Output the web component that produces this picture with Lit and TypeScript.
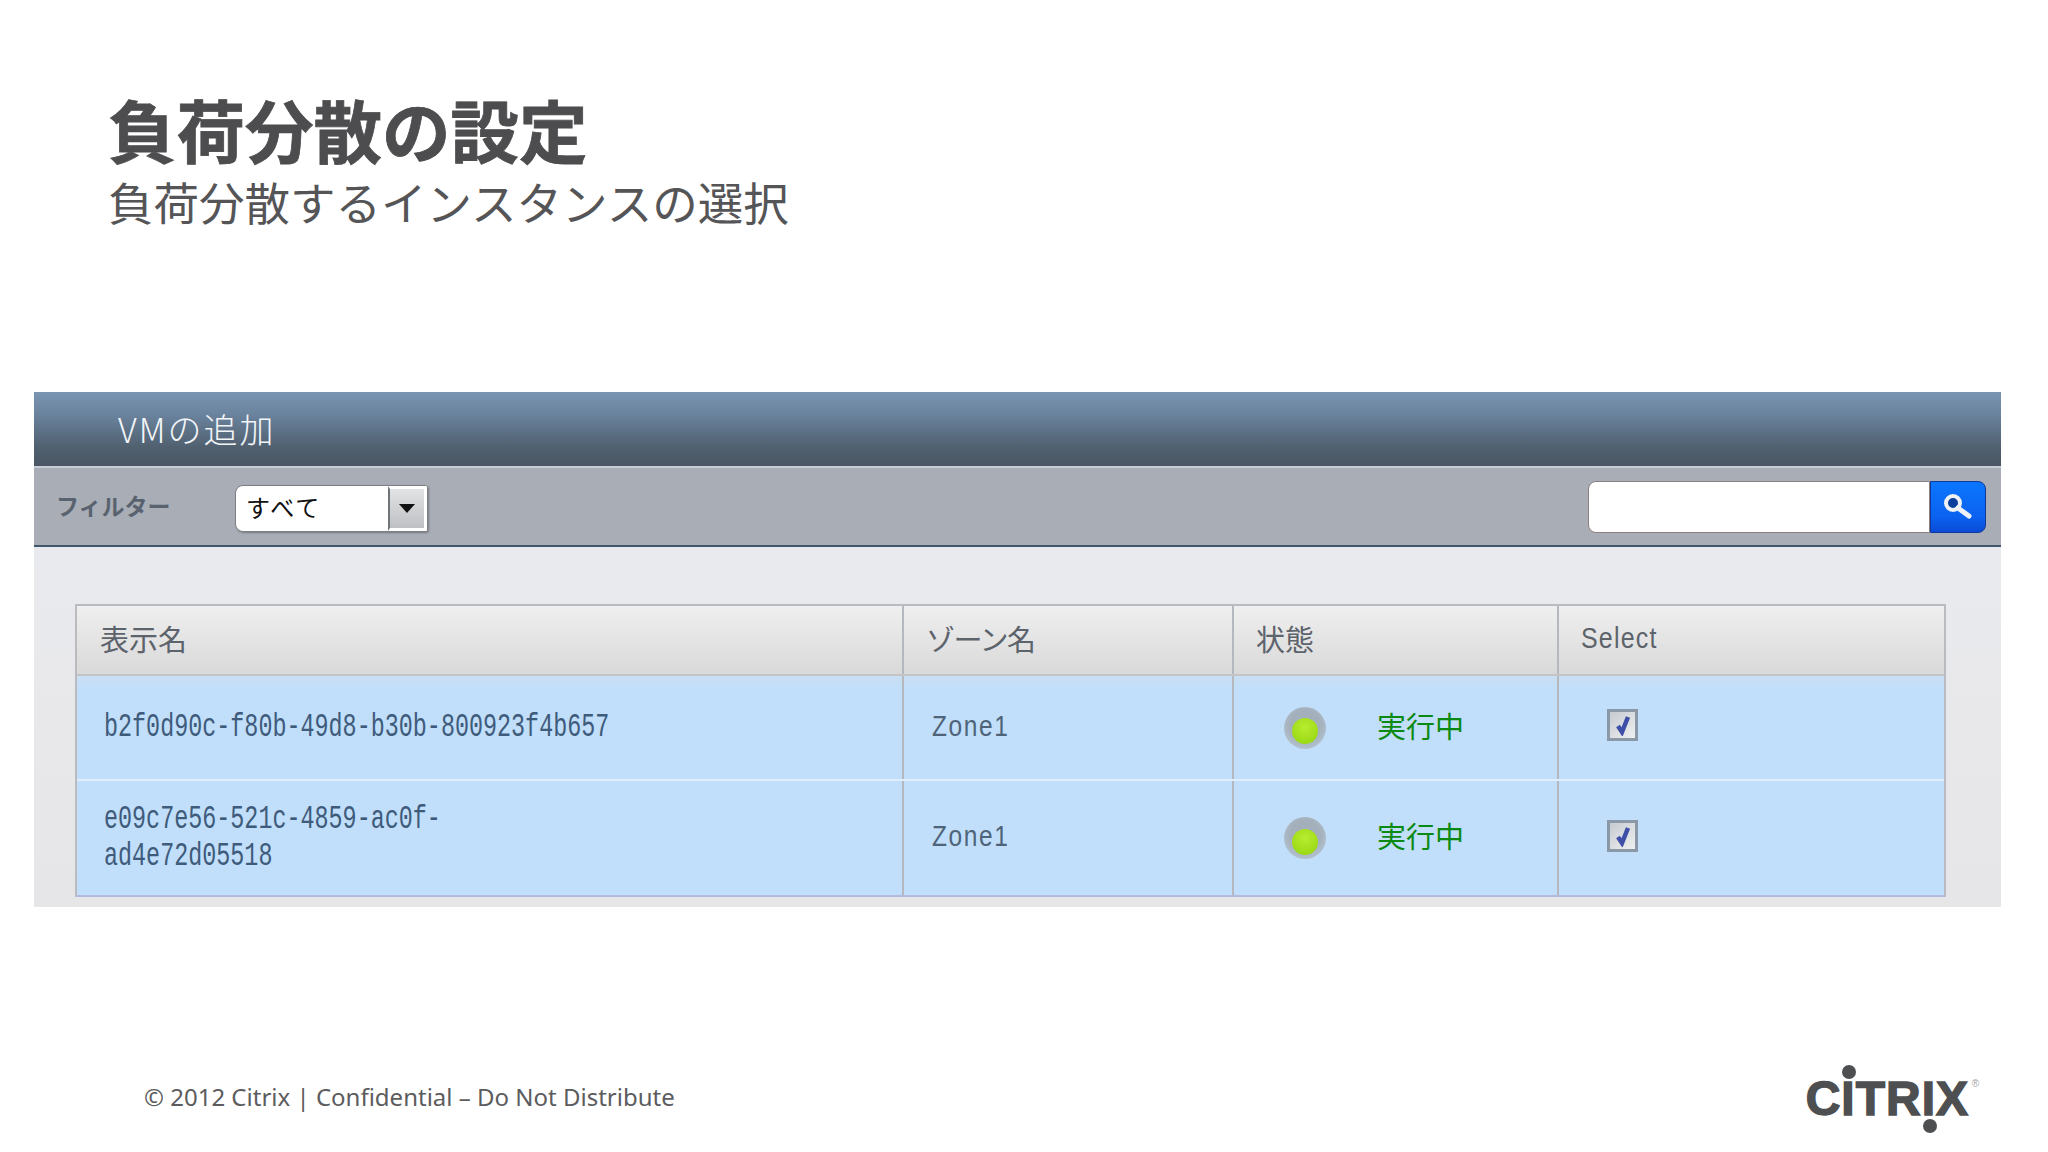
import { LitElement, html, css } from 'lit';
import { customElement } from 'lit/decorators.js';

const rows = [
  { lines: ['b2f0d90c-f80b-49d8-b30b-800923f4b657'], height: 103 },
  { lines: ['e09c7e56-521c-4859-ac0f-', 'ad4e72d05518'], height: 114 },
];

@customElement('app-root')
export class AppRoot extends LitElement {
  static styles = css`
    :host {
      display: block;
      width: 2048px;
      height: 1152px;
      overflow: hidden;
      background: #ffffff;
      font-family: "Noto Sans CJK JP", "Noto Sans", sans-serif;
    }

    .heading {
      padding: 91px 0 0 108px;
      color: #4d4d4f;
    }

    .title {
      font-size: 68.5px;
      line-height: 76px;
      font-weight: 700;
      -webkit-text-stroke: 0.8px #4d4d4f;
    }

    .subtitle {
      margin-top: 7px;
      font-size: 45.5px;
      line-height: 54px;
      color: #555557;
    }

    .panel {
      margin: 164px 0 0 34px;
      width: 1967px;
      height: 515px;
      display: flex;
      flex-direction: column;
      background: linear-gradient(#ebecf0, #e6e6e8);
    }

    .panel-head {
      height: 74px;
      box-sizing: border-box;
      padding: 0 0 2px 84px;
      display: flex;
      align-items: center;
      font-size: 34px;
      letter-spacing: 2px;
      color: #f2f5f8;
      font-weight: 300;
      background: linear-gradient(#7a95b2, #6a839e 30%, #50606f 75%, #4a5664);
    }

    .toolbar {
      height: 81px;
      box-sizing: border-box;
      border-top: 2px solid #c6cdd4;
      border-bottom: 2px solid #40566c;
      background: #a8adb6;
      display: flex;
      align-items: center;
      padding: 0 15px 0 22px;
    }

    .filter-label {
      width: 179px;
      padding-bottom: 4px;
      font-size: 23px;
      font-weight: 700;
      color: #59636f;
    }

    .select {
      width: 193px;
      height: 47px;
      margin-top: 4px;
      box-sizing: border-box;
      display: flex;
      background: #ffffff;
      border-radius: 8px 3px 3px 8px;
      border: 1px solid #7d7f84;
      box-shadow: 1px 1px 2px #77797e;
      overflow: hidden;
    }

    .select-value {
      flex: 1;
      padding-left: 10px;
      font-size: 24px;
      letter-spacing: 2px;
      line-height: 42px;
      color: #111111;
    }

    .select-arrow {
      width: 39px;
      box-sizing: border-box;
      border: 3px solid #ffffff;
      border-left: 2px solid #70757c;
      background: linear-gradient(#e2e3e5, #bfc0c3);
      display: flex;
      align-items: center;
      justify-content: center;
    }

    .search {
      margin-left: auto;
      display: flex;
      height: 52px;
    }

    .search-input {
      width: 342px;
      box-sizing: border-box;
      background: #ffffff;
      border: 1px solid #8c7f80;
      border-radius: 8px 0 0 8px;
    }

    .search-button {
      width: 56px;
      box-sizing: border-box;
      border: 1px solid #10389a;
      border-radius: 0 8px 8px 0;
      background: linear-gradient(#0a76ff, #0b62f0 70%, #0a4bd6);
      display: flex;
      align-items: center;
      justify-content: center;
    }

    .table-wrap {
      padding: 57px 55px 0 41px;
    }

    .table {
      width: 1871px;
      box-sizing: border-box;
      border: 2px solid #b9bbc1;
      border-bottom-color: #b3bcdd;
    }

    .row {
      display: grid;
      grid-template-columns: 825px 330px 325px 1fr;
    }

    .row.head {
      height: 68px;
      background: linear-gradient(#efeff0, #d9d9da);
      border-bottom: 2px solid #c4c4c6;
    }

    .row.data {
      background: linear-gradient(#c9dff3, #c1dffa 14px);
    }

    .row.data + .row.data {
      background: #c1dffa;
      border-top: 2px solid #e0eefc;
    }

    .cell {
      display: flex;
      align-items: center;
      border-left: 2px solid #b5b8bf;
      box-sizing: border-box;
      min-width: 0;
    }

    .cell:first-child {
      border-left: 0;
    }

    .head .cell {
      padding: 0 0 5px 22px;
      font-size: 29px;
      color: #5d636b;
    }

    .head .cell:first-child {
      padding-left: 23px;
    }

    .head .tight {
      letter-spacing: -1.5px;
    }

    .head .latin {
      font-family: "Liberation Sans", sans-serif;
      font-size: 25px;
      letter-spacing: 1.2px;
      display: inline-block;
      transform: scaleY(1.2);
    }

    .name {
      padding-left: 27px;
      font-family: "Liberation Mono", monospace;
      font-size: 23.4px;
      color: #3f5b7c;
    }

    .name-lines {
      display: block;
      transform: scaleY(1.4);
      line-height: 26px;
    }

    .name-lines div {
      height: 26px;
      white-space: nowrap;
    }

    .zone {
      padding: 0 0 4px 28px;
      font-family: "Liberation Sans", sans-serif;
      font-size: 24.5px;
      letter-spacing: 1.6px;
      color: #4f6479;
    }

    .zone span {
      display: inline-block;
      transform: scaleY(1.2);
    }

    .state {
      padding: 0 0 6px 50px;
      font-size: 29px;
      color: #0a8a12;
    }

    .led {
      width: 42px;
      height: 42px;
      margin-top: 6px;
      border-radius: 50%;
      background: radial-gradient(circle at 50% 42%, #a3afba 45%, #b5c4d2 80%, #c1dffa 100%);
      display: flex;
      align-items: center;
      justify-content: center;
      flex: none;
      margin-right: 51px;
    }

    .led i {
      display: block;
      width: 26px;
      height: 26px;
      margin-top: 7px;
      border-radius: 50%;
      background: radial-gradient(circle at 50% 35%, #b8ec30, #92d40c);
    }

    .pick {
      padding: 0 0 5px 48px;
    }

    .check {
      width: 31px;
      height: 32px;
      box-sizing: border-box;
      border: 3px solid #8a98a8;
      background: linear-gradient(135deg, #c6cbd1, #efefef);
      display: flex;
      align-items: center;
      justify-content: center;
    }

    .footer {
      margin-top: 154px;
      height: 70px;
      display: flex;
      align-items: center;
      padding-left: 144px;
      font-family: "Noto Sans", sans-serif;
      font-size: 24px;
      color: #5c5c5e;
    }

    .logo {
      margin: 6px 79px 0 auto;
      display: flex;
      position: relative;
      font-family: "Liberation Sans", sans-serif;
      font-weight: 700;
      font-size: 48px;
      line-height: 48px;
      color: #4d4f51;
      -webkit-text-stroke: 1.5px #4d4f51;
      letter-spacing: 1px;
    }

    .logo .dotted {
      position: relative;
    }

    .logo .dotted::after {
      content: '';
      position: absolute;
      left: 1px;
      width: 14px;
      height: 14px;
      border-radius: 50%;
      background: #4d4f51;
    }

    .logo .up::after {
      top: -10px;
    }

    .logo .down::after {
      bottom: -10px;
    }

    .logo sup {
      position: absolute;
      top: 4px;
      right: -10px;
      font-size: 10px;
      line-height: 10px;
      font-weight: 400;
      letter-spacing: 0;
      color: #a5a5a7;
      -webkit-text-stroke: 0;
    }
  `;

  render() {
    return html`
      <div class="heading">
        <div class="title">負荷分散の設定</div>
        <div class="subtitle">負荷分散するインスタンスの選択</div>
      </div>

      <div class="panel">
        <div class="panel-head">VMの追加</div>
        <div class="toolbar">
          <div class="filter-label">フィルター</div>
          <div class="select">
            <div class="select-value">すべて</div>
            <div class="select-arrow">
              <svg width="16" height="9" viewBox="0 0 16 9"><path d="M0 0h16L8 9z" fill="#111"></path></svg>
            </div>
          </div>
          <div class="search">
            <div class="search-input"></div>
            <div class="search-button">
              <svg width="32" height="28" viewBox="0 0 32 28">
                <circle cx="11" cy="10" r="7" fill="#0b3f9c" stroke="#eef2f8" stroke-width="4"></circle>
                <path d="M16 15l11 8" stroke="#eef2f8" stroke-width="5" stroke-linecap="round"></path>
              </svg>
            </div>
          </div>
        </div>

        <div class="table-wrap">
          <div class="table">
            <div class="row head">
              <div class="cell">表示名</div>
              <div class="cell"><span class="tight">ゾーン名</span></div>
              <div class="cell">状態</div>
              <div class="cell"><span class="latin">Select</span></div>
            </div>
            ${rows.map(
              (r) => html`
                <div class="row data" style="height: ${r.height}px">
                  <div class="cell name">
                    <div class="name-lines">${r.lines.map((l) => html`<div>${l}</div>`)}</div>
                  </div>
                  <div class="cell zone"><span>Zone1</span></div>
                  <div class="cell state"><div class="led"><i></i></div>実行中</div>
                  <div class="cell pick">
                    <div class="check">
                      <svg width="20" height="22" viewBox="0 0 20 22">
                        <path d="M5 12l4 6L15 3" fill="none" stroke="#3f4fa8" stroke-width="4.5"></path>
                      </svg>
                    </div>
                  </div>
                </div>
              `
            )}
          </div>
        </div>
      </div>

      <div class="footer">
        <span>© 2012 Citrix | Confidential – Do Not Distribute</span>
        <div class="logo">
          <span>C</span><span class="dotted up">I</span><span>TR</span><span class="dotted down">I</span><span>X</span>
          <sup>®</sup>
        </div>
      </div>
    `;
  }
}
